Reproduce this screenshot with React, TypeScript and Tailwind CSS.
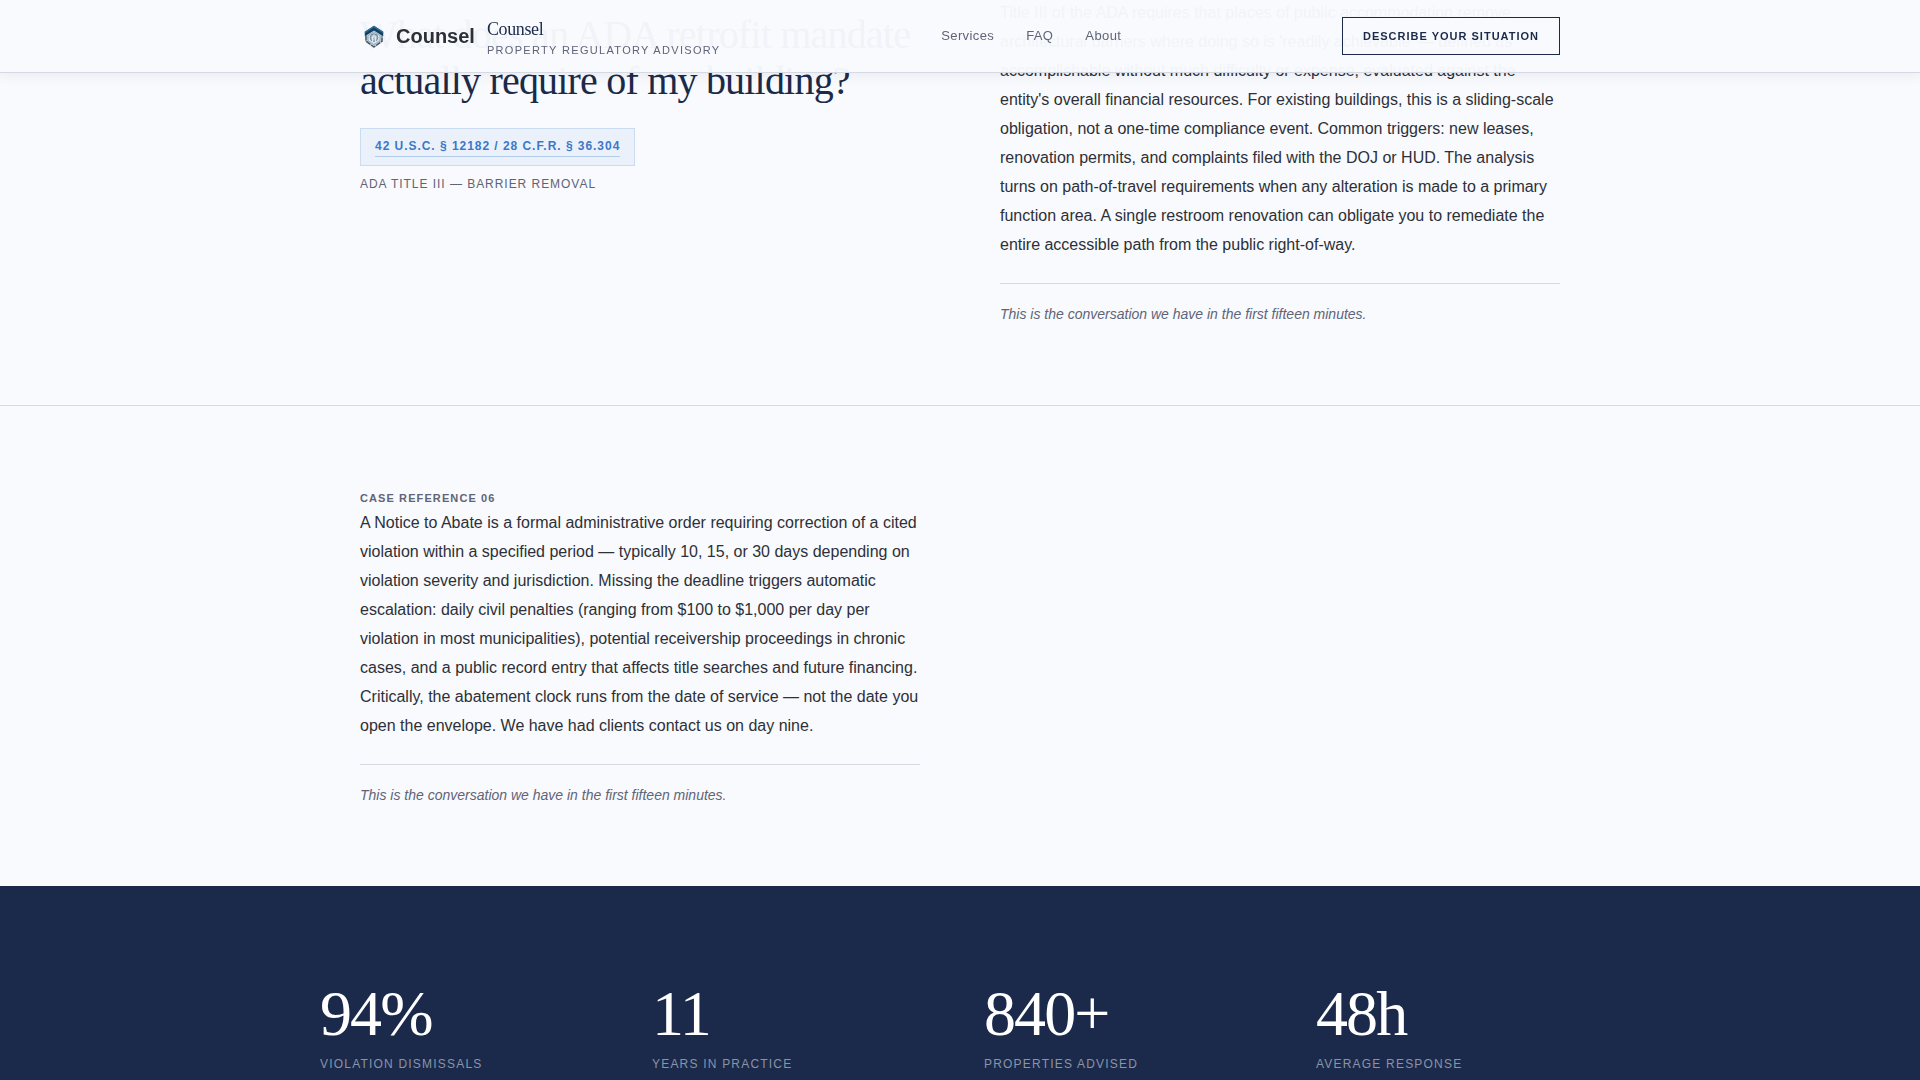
import React from "react";

const serif = "font-['Liberation_Serif',serif]";

function Emblem() {
  return (
    <svg viewBox="0 0 28 28" className="size-7" aria-hidden="true">
      <path d="M14 4 23 10v9.6L14 26 5 19.6V10Z" fill="#c3d0da" />
      <path d="M6 13.6v5.6l8 5.8 8-5.8v-5.6" fill="none" stroke="#46535f" strokeWidth="1.4" strokeDasharray="5 1" />
      <path d="M14 3.8 23.2 9.8v4.4L14 8.4l-9.2 5.8V9.8Z" fill="#123f60" />
      <path d="M14 3.8 23.2 9.8v1.6L14 5.6 4.8 11.4V9.8Z" fill="#2c6e96" />
      <path d="M14 9.8 20 13.6v5L14 22.6l-6-4v-5Z" fill="#dbe5ec" stroke="#8299aa" strokeWidth="0.8" />
      <circle cx="14" cy="15.6" r="3.8" fill="#a9bdcc" stroke="#5f7f99" strokeWidth="0.9" />
      <path d="M12.6 20v-5.2h3V20M14 12.6v1.6" fill="none" stroke="#eef4f8" strokeWidth="0.9" />
    </svg>
  );
}

function Header() {
  return (
    <header className="fixed inset-x-0 top-0 z-10 border-b border-[#d4d9e4] bg-[#f8fafd]/97 shadow-[0_2px_12px_rgba(27,42,74,0.08)]">
      <div className="mx-auto flex h-18 max-w-[1200px] items-center justify-between">
        <a href="#" className="flex items-center gap-3">
          <span className="flex items-center gap-2">
            <Emblem />
            <span className="text-xl font-bold text-[#2d3038]">Counsel</span>
          </span>
          <span className="flex flex-col gap-[3px] pt-1">
            <span className={`${serif} text-lg leading-5 tracking-[-0.02em] text-[#1b2a4a]`}>Counsel</span>
            <span className="text-[11px] leading-4 tracking-[0.12em] text-[#5f6478] uppercase">Property Regulatory Advisory</span>
          </span>
        </a>
        <nav className="flex gap-8 text-[13px] tracking-[0.03em] text-[#5f6478]">
          <a href="#services">Services</a>
          <a href="#faq">FAQ</a>
          <a href="#about">About</a>
        </nav>
        <button className="border border-[#1b2a4a] px-5 py-2.5 text-[11px] leading-4 font-bold tracking-[1px] text-[#1b2a4a] uppercase">
          Describe your situation
        </button>
      </div>
    </header>
  );
}

function Answer({ children }: { children: React.ReactNode }) {
  return (
    <div>
      <p className="text-base leading-[29px] text-[#2d3038]">{children}</p>
      <p className="mt-6 border-t border-[#d4d9e4] pt-[19px] text-sm leading-[22px] text-[#5f6478] italic">
        This is the conversation we have in the first fifteen minutes.
      </p>
    </div>
  );
}

const stats = [
  ["94%", "Violation dismissals"],
  ["11", "Years in practice"],
  ["840+", "Properties advised"],
  ["48h", "Average response"],
];

export default function App() {
  return (
    <div className="min-h-screen overflow-x-hidden bg-[#f8fafd] font-['Liberation_Sans',sans-serif]">
      <Header />
      <main className="-mt-0.5">
        <section className="border-b border-[#d4d9e4] pb-20">
          <div className="mx-auto grid max-w-[1200px] grid-cols-2 gap-20">
            <div className="pt-3.5">
              <h2 className={`${serif} text-[40px] leading-[46px] tracking-[-0.02em] text-[#1b2a4a]`}>
                What does an ADA retrofit mandate actually require of my building?
              </h2>
              <div className="mt-6 inline-block border border-[#ccdcf0] bg-[#ebf1fb] px-3.5 py-2">
                <a href="#statute" className="block border-b border-[#b4cdec] pb-px text-xs leading-[18px] font-bold tracking-[0.08em] text-[#3b78c8]">
                  42 U.S.C. § 12182 / 28 C.F.R. § 36.304
                </a>
              </div>
              <p className="mt-2 text-xs leading-5 tracking-[0.08em] text-[#5f6478] uppercase">ADA Title III — Barrier Removal</p>
            </div>
            <Answer>
              Title III of the ADA requires that places of public accommodation remove architectural barriers where doing so is
              'readily achievable' — defined as accomplishable without much difficulty or expense, evaluated against the entity's
              overall financial resources. For existing buildings, this is a sliding-scale obligation, not a one-time compliance
              event. Common triggers: new leases, renovation permits, and complaints filed with the DOJ or HUD. The analysis
              turns on path-of-travel requirements when any alteration is made to a primary function area. A single restroom
              renovation can obligate you to remediate the entire accessible path from the public right-of-way.
            </Answer>
          </div>
        </section>
        <section className="py-20">
          <div className="mx-auto grid max-w-[1200px] grid-cols-2 gap-20">
            <div className="pt-0.5">
              <h3 className="text-[11px] leading-5 font-bold tracking-[0.1em] text-[#5f6478] uppercase">Case reference 06</h3>
              <Answer>
                A Notice to Abate is a formal administrative order requiring correction of a cited violation within a specified
                period — typically 10, 15, or 30 days depending on violation severity and jurisdiction. Missing the deadline
                triggers automatic escalation: daily civil penalties (ranging from $100 to $1,000 per day per violation in most
                municipalities), potential receivership proceedings in chronic cases, and a public record entry that affects
                title searches and future financing. Critically, the abatement clock runs from the date of service — not the
                date you open the envelope. We have had clients contact us on day nine.
              </Answer>
            </div>
          </div>
        </section>
        <section className="bg-[#1b2a4a] pt-24 pb-2">
          <dl className="mx-auto grid max-w-[1280px] grid-cols-4 gap-12">
            {stats.map(([value, label]) => (
              <div key={label} className="flex flex-col-reverse gap-2">
                <dt className="text-xs leading-5 tracking-[0.1em] text-[#8a93a8] uppercase">{label}</dt>
                <dd className={`${serif} text-[64px] leading-16 tracking-[-0.03em] text-white`}>{value}</dd>
              </div>
            ))}
          </dl>
        </section>
      </main>
    </div>
  );
}
